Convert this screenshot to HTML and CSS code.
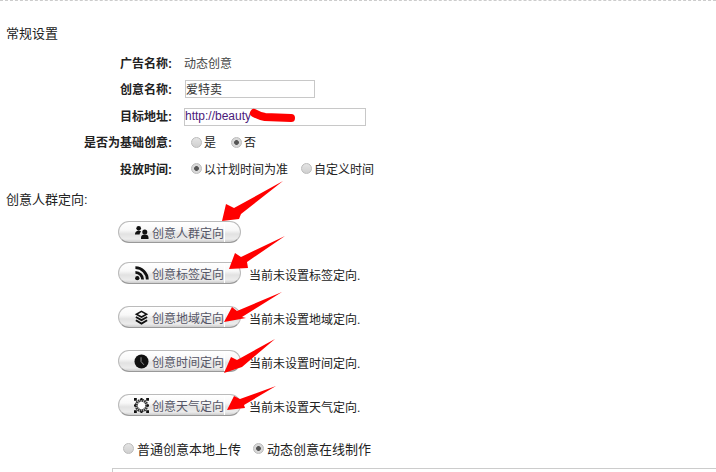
FILE: index.html
```html
<!DOCTYPE html>
<html lang="zh-CN">
<head>
    <meta charset="UTF-8">
    <title>常规设置</title>
    <link rel="stylesheet" href="styles.css">
</head>
<body>
    <div class="page">
        <h2 class="section-title">常规设置</h2>

        <div class="form-row">
            <label class="form-label">广告名称:</label>
            <span class="form-value">动态创意</span>
        </div>
        <div class="form-row">
            <label class="form-label">创意名称:</label>
            <input class="text-input name-input" type="text" value="爱特卖">
        </div>
        <div class="form-row">
            <label class="form-label">目标地址:</label>
            <input class="text-input url-input" type="text" value="http://beauty">
        </div>
        <div class="form-row">
            <label class="form-label">是否为基础创意:</label>
            <div class="radio-group">
                <label class="radio-item"><input type="radio" name="base">是</label>
                <label class="radio-item"><input type="radio" name="base" checked>否</label>
            </div>
        </div>
        <div class="form-row">
            <label class="form-label">投放时间:</label>
            <div class="radio-group wide">
                <label class="radio-item"><input type="radio" name="time" checked>以计划时间为准</label>
                <label class="radio-item"><input type="radio" name="time">自定义时间</label>
            </div>
        </div>

        <h3 class="group-title">创意人群定向:</h3>

        <div class="target-list">
            <div class="target-row">
                <a class="target-btn">
                    <svg class="icon" viewBox="0 0 16 16"><circle cx="5" cy="3.5" r="2.5"/><path d="M1 10c0-2.500 1.500-4 4-4 1.200 0 2 .3 2.700.9C6.600 7.800 6 9 6 10z"/><circle cx="11.500" cy="7.500" r="2.700"/><path d="M7.500 15v-1.500c0-2 1.500-3.300 4-3.300s4 1.300 4 3.300V15z"/></svg>
                    <span class="target-text">创意人群定向</span>
                    <i class="btn-sep"></i>
                </a>
            </div>
            <div class="target-row">
                <a class="target-btn">
                    <svg class="icon" viewBox="0 0 16 16"><circle cx="3.500" cy="13" r="2.300"/><path d="M1.500 6.800a7.700 7.700 0 0 1 7.700 7.700" fill="none" stroke="#111" stroke-width="3"/><path d="M1.500 1.800a12.700 12.700 0 0 1 12.700 12.700" fill="none" stroke="#111" stroke-width="3"/></svg>
                    <span class="target-text">创意标签定向</span>
                    <i class="btn-sep"></i>
                </a>
                <span class="target-hint">当前未设置标签定向.</span>
            </div>
            <div class="target-row">
                <a class="target-btn">
                    <svg class="icon" viewBox="0 0 16 16"><path d="M8 1.500l5.500 3-5.500 3-5.500-3z" fill="none" stroke="#111" stroke-width="1.600"/><path d="M2 7.500l6 3.300 6-3.300M2 11l6 3.500 6-3.500" fill="none" stroke="#111" stroke-width="2"/></svg>
                    <span class="target-text">创意地域定向</span>
                    <i class="btn-sep"></i>
                </a>
                <span class="target-hint">当前未设置地域定向.</span>
            </div>
            <div class="target-row">
                <a class="target-btn">
                    <svg class="icon" viewBox="0 0 16 16"><circle cx="8" cy="8" r="7.500"/><path d="M7.500 3.500V8l3 3.500" fill="none" stroke="#999" stroke-width="1"/></svg>
                    <span class="target-text">创意时间定向</span>
                    <i class="btn-sep"></i>
                </a>
                <span class="target-hint">当前未设置时间定向.</span>
            </div>
            <div class="target-row">
                <a class="target-btn">
                    <svg class="icon" viewBox="0 0 16 16"><circle cx="8" cy="8" r="4" fill="#fff"/><circle cx="8" cy="8" r="5.600" fill="none" stroke="#333" stroke-width="3.200" stroke-dasharray="1.600 .6"/><path d="M0 0h3v3H0zM13 0h3v3h-3zM0 13h3v3H0zM13 13h3v3h-3zM7 0h2v2H7zM7 14h2v2H7zM0 7h2v2H0zM14 7h2v2h-2z"/></svg>
                    <span class="target-text">创意天气定向</span>
                    <i class="btn-sep"></i>
                </a>
                <span class="target-hint">当前未设置天气定向.</span>
            </div>
        </div>

        <div class="radio-group upload-mode">
            <label class="radio-item"><input type="radio" name="mode">普通创意本地上传</label>
            <label class="radio-item"><input type="radio" name="mode" checked>动态创意在线制作</label>
        </div>

        <div class="editor-box"></div>
    </div>

    <!-- 截图上的红色标注 -->
    <svg class="marks" width="716" height="472" viewBox="0 0 716 472">
        <path d="M254 113q5 3 11 4l26 1" fill="none" stroke="#f00" stroke-width="8" stroke-linecap="round"/>
        <polygon points="222,221 226,204 234,208 283,181 241,214 239,219"/>
        <polygon points="229,269 235,253 241,257 285,236 247,262 248,268"/>
        <polygon points="224,322 232,307 237,311 282,292 242,317 246,318"/>
        <polygon points="224,373 231,357 237,360 275,339 242,367 248,365"/>
        <polygon points="227,410 234,396 240,399 276,386 244,405 245,408"/>
    </svg>
</body>
</html>
```

FILE: styles.css
```css
html, body {
    margin: 0;
    height: 472px;
    overflow: hidden;
    background: #fff;
}

body {
    font-family: "Liberation Sans", "Noto Sans CJK SC", sans-serif;
    font-size: 12px;
    color: #333;
    position: relative;
}

.page {
    border-top: 1px dashed #ccc;
    padding-top: 24px;
}

.section-title {
    margin: 0 0 7px 6px;
    height: 17px;
    line-height: 17px;
    font-size: 13px;
    font-weight: normal;
    color: #222;
}

.form-row {
    display: flex;
    align-items: center;
    height: 26.5px;
}

.form-label {
    width: 172px;
    flex: none;
    text-align: right;
    font-weight: bold;
    color: #222;
}

.form-value {
    margin-left: 12px;
    color: #444;
}

.text-input {
    box-sizing: border-box;
    height: 18px;
    padding: 0;
    border: 1px solid #c8c8c8;
    font-family: inherit;
    font-size: 12px;
    color: #333;
    outline: none;
}

.name-input {
    width: 130px;
    margin-left: 13px;
}

.url-input {
    width: 182px;
    margin: 4px 0 0 12px;
    padding-bottom: 2px;
    color: #4b1a7a;
}

.radio-group {
    display: flex;
    gap: 15px;
    margin-left: 19px;
}

.radio-group.wide {
    gap: 13px;
}

.radio-item {
    display: flex;
    align-items: center;
    color: #222;
}

.radio-item input {
    -webkit-appearance: none;
    appearance: none;
    box-sizing: border-box;
    width: 11px;
    height: 11px;
    margin: 1px 2px 0 0;
    border: 1px solid #bbb;
    border-radius: 50%;
    background: linear-gradient(#e4e4e4, #d0d0d0);
}

.radio-item input:checked {
    background: radial-gradient(circle, #555 0, #555 2px, #d8d8d8 2.8px);
}

.group-title {
    margin: 9.5px 0 0 6px;
    height: 17px;
    line-height: 17px;
    font-size: 13px;
    font-weight: normal;
    color: #222;
}

.target-list {
    display: flex;
    flex-direction: column;
    gap: 22px;
    margin: 13px 0 0 118px;
}

.target-row {
    display: flex;
    align-items: center;
    height: 22px;
}

.target-row:first-child {
    margin-bottom: -3px;
}

.target-btn {
    box-sizing: border-box;
    display: flex;
    align-items: center;
    width: 123px;
    height: 22px;
    padding-left: 15px;
    border: 1px solid #bbb;
    border-bottom-color: #999;
    border-radius: 11px;
    background: linear-gradient(#fff 0, #f8f8f8 40%, #e2e2e2 60%, #ececec 85%, #ccc 100%);
    color: #556;
}

.icon {
    width: 15px;
    height: 15px;
    flex: none;
    fill: #111;
}

.target-text {
    margin-left: 3px;
    white-space: nowrap;
}

.btn-sep {
    align-self: stretch;
    width: 1px;
    background: #fff;
}

.target-hint {
    margin: 2px 0 0 8px;
    color: #222;
}

.upload-mode {
    gap: 12px;
    height: 20px;
    margin: 22px 0 0 123px;
    font-size: 13px;
}

.upload-mode .radio-item input {
    margin-right: 3px;
}

.editor-box {
    height: 3px;
    margin: 10px 0 0 112px;
    border-top: 1px solid #ccc;
    border-left: 1px solid #ccc;
}

/* red marks drawn over the page */
.marks {
    position: absolute;
    left: 0;
    top: 0;
    pointer-events: none;
}

.marks polygon {
    fill: #f00;
}
```
